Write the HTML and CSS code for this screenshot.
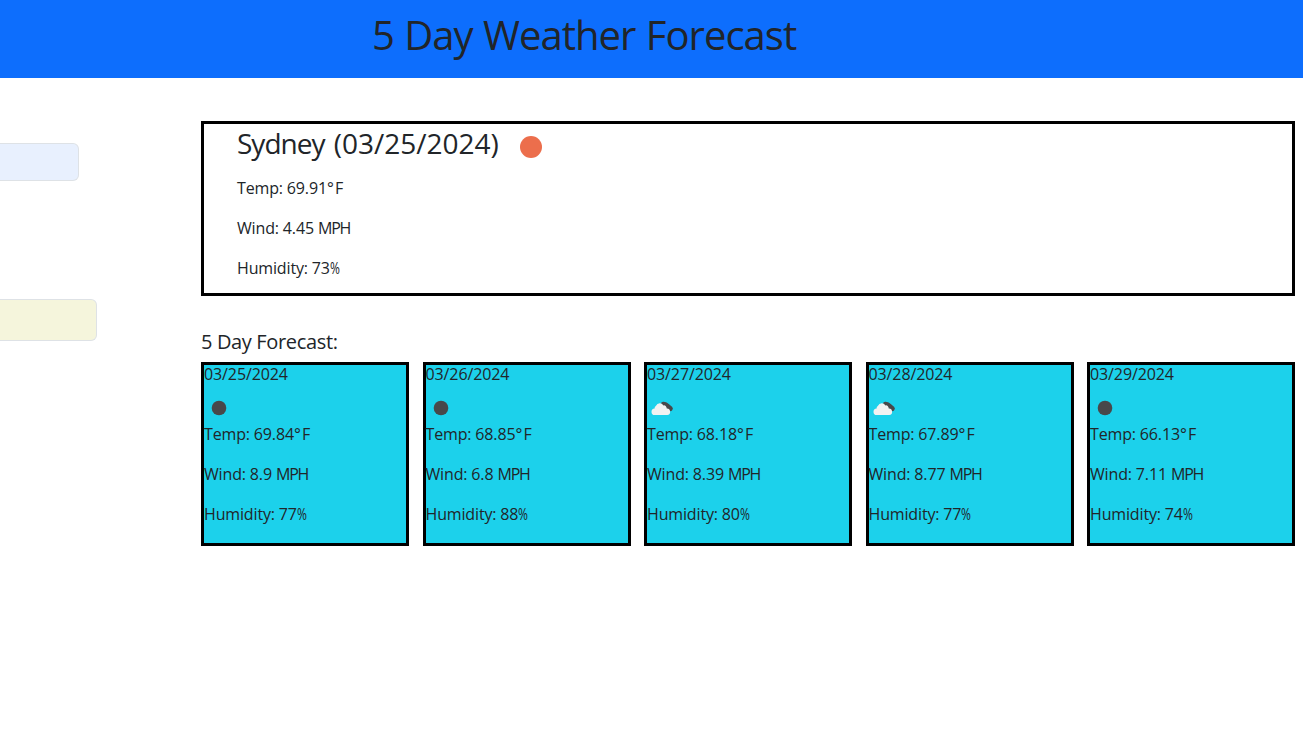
FILE: index.html
```html
<!DOCTYPE html>
<html lang="en">
<head>
<meta charset="utf-8">
<title>5 Day Weather Forecast</title>
<link rel="stylesheet" href="styles.css">
</head>
<body>
<svg class="defs" aria-hidden="true">
  <symbol id="moon" viewBox="0 0 30 30"><circle cx="15" cy="15" r="7.3" fill="#48484a"/></symbol>
  <symbol id="cloud" viewBox="0 0 30 30">
    <path d="M16.3 11.2 L18.6 11.6 L21 13.4 L23.4 15.6" fill="none" stroke="#48484a" stroke-width="4.8" stroke-linecap="round" stroke-linejoin="round"/>
    <path d="M7.8 22a3.2 3.2 0 0 1-.2-6.4 2.9 2.9 0 0 1 1.4-2.9 4.2 4.2 0 0 1 7.4-.3 2.7 2.7 0 0 1 3.2 3.2 3.2 3.2 0 0 1 .6 6.4z" fill="#f2f2f2"/>
  </symbol>
</svg>
<header class="banner"><h1 class="title">5 Day Weather Forecast</h1></header>
<div class="layout">
  <aside class="sidebar">
    <div class="search"></div>
    <div class="history"></div>
  </aside>
  <main class="main">
    <section class="today">
      <div class="today-head">
        <h2 class="city"><span class="city-name">Sydney</span> (03/25/2024)</h2>
        <svg class="sun" viewBox="0 0 24 24"><circle cx="12" cy="12" r="11" fill="#ec6e4c"/></svg>
      </div>
      <p class="line">Temp: 69.91<span class="deg">°</span>F</p>
      <p class="line">Wind: 4.45 <span class="unit">MPH</span></p>
      <p class="line">Humidity: 73<span class="pct">%</span></p>
    </section>
    <h3 class="subtitle">5 Day Forecast:</h3>
    <section class="cards">
      <article class="card"><div class="date">03/25/2024</div><svg class="icon"><use href="#moon"/></svg><p class="line">Temp: 69.84<span class="deg">°</span>F</p><p class="line">Wind: 8.9 <span class="unit">MPH</span></p><p class="line">Humidity: 77<span class="pct">%</span></p></article>
      <article class="card"><div class="date">03/26/2024</div><svg class="icon"><use href="#moon"/></svg><p class="line">Temp: 68.85<span class="deg">°</span>F</p><p class="line">Wind: 6.8 <span class="unit">MPH</span></p><p class="line">Humidity: 88<span class="pct">%</span></p></article>
      <article class="card"><div class="date">03/27/2024</div><svg class="icon"><use href="#cloud"/></svg><p class="line">Temp: 68.18<span class="deg">°</span>F</p><p class="line">Wind: 8.39 <span class="unit">MPH</span></p><p class="line">Humidity: 80<span class="pct">%</span></p></article>
      <article class="card"><div class="date">03/28/2024</div><svg class="icon"><use href="#cloud"/></svg><p class="line">Temp: 67.89<span class="deg">°</span>F</p><p class="line">Wind: 8.77 <span class="unit">MPH</span></p><p class="line">Humidity: 77<span class="pct">%</span></p></article>
      <article class="card"><div class="date">03/29/2024</div><svg class="icon"><use href="#moon"/></svg><p class="line">Temp: 66.13<span class="deg">°</span>F</p><p class="line">Wind: 7.11 <span class="unit">MPH</span></p><p class="line">Humidity: 74<span class="pct">%</span></p></article>
    </section>
  </main>
</div>
</body>
</html>
```
FILE: styles.css
```css
* { box-sizing: border-box; margin: 0; }
body {
  font-family: "Trebuchet MS", "Open Sans", sans-serif;
  font-size: 16px;
  line-height: 24px;
  color: #212529;
  background: #fff;
  overflow: hidden;
}
.defs { display: none; }
.banner { height: 78px; padding: 11px 0 0 372px; background: #0d6efd; }
.title { font-size: 40px; line-height: 48px; font-weight: 400; letter-spacing: -0.98px; word-spacing: 1px; white-space: nowrap; }
.layout { display: flex; padding-right: 8px; }
.sidebar { width: 201px; padding-top: 65px; }
.search {
  width: 79px; height: 38px;
  border: 1px solid #dee2e6; border-left: 0;
  border-radius: 0 6px 6px 0;
  background: #e8f0fe;
}
.history {
  width: 97px; height: 42px; margin-top: 118px;
  border: 1px solid #dee2e6; border-left: 0;
  border-radius: 0 6px 6px 0;
  background: #f5f5dc;
}
.main { flex: 1; padding-top: 43px; }
.today { height: 175px; padding: 3px 0 0 33px; border: 3px solid #000; }
.today-head { display: flex; align-items: center; height: 34px; margin-bottom: 15px; }
.city { width: 282px; font-size: 28px; line-height: 32px; margin-bottom: 2px; font-weight: 400; word-spacing: 2px; white-space: nowrap; }
.city-name { letter-spacing: -1px; }
.sun { width: 24px; height: 24px; margin-top: 5px; }
.line { margin-bottom: 16px; letter-spacing: -0.15px; white-space: nowrap; }
.deg { margin: 0 1.5px 0 0; }
.unit { letter-spacing: -1.2px; }
.pct { display: inline-block; width: 10px; transform: scaleX(0.75); transform-origin: left; }
.subtitle { margin-top: 34px; font-size: 20px; line-height: 24px; font-weight: 500; letter-spacing: -0.35px; }
.cards { display: flex; justify-content: space-between; margin-top: 8px; }
.card { width: 208px; height: 184px; border: 3px solid #000; background: #1cd1eb; }
.date { height: 28px; line-height: 18px; letter-spacing: -0.1px; }
.icon { display: block; width: 30px; height: 30px; margin-bottom: -1px; }
```
